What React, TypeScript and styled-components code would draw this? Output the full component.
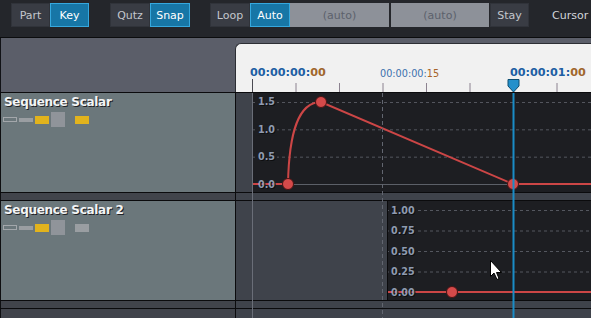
import React from 'react'
import styled, { createGlobalStyle } from 'styled-components'

const GlobalStyle = createGlobalStyle`
  html, body {
    margin: 0;
    padding: 0;
    background: #24262b;
  }
  body {
    font-family: "DejaVu Sans", Verdana, sans-serif;
  }
`

// timeline scale (lane-local x)
const ZERO = 16.5
const SEC = 261
const frameX = (f: number) => ZERO + (f / 30) * SEC
const PLAYHEAD = frameX(30)

const Frame = styled.div`
  width: 591px;
  height: 318px;
  overflow: hidden;
  display: flex;
  flex-direction: column;
  background: #3f424a;
`

const Toolbar = styled.div`
  height: 38px;
  box-sizing: border-box;
  border-bottom: 1px solid #0b0c0e;
  background: #24262b;
  display: flex;
  align-items: flex-start;
  padding: 3px 0 0 11px;
`

const Group = styled.div<{ $gap?: number }>`
  display: flex;
  margin-left: ${p => p.$gap ?? 0}px;
`

const ToolButton = styled.div<{ $active?: boolean; $w: number; $gap?: number }>`
  width: ${p => p.$w}px;
  margin-left: ${p => p.$gap ?? 0}px;
  height: 24px;
  box-sizing: border-box;
  display: flex;
  align-items: center;
  justify-content: center;
  font-size: 11px;
  color: ${p => (p.$active ? '#ffffff' : '#c3c6cc')};
  background: ${p => (p.$active ? '#1776a6' : '#393c44')};
  border: 1px solid ${p => (p.$active ? '#36a8de' : '#30333a')};
`

const Field = styled.div<{ $w: number; $gap?: number }>`
  width: ${p => p.$w}px;
  margin-left: ${p => p.$gap ?? 0}px;
  height: 24px;
  display: flex;
  align-items: center;
  justify-content: center;
  font-size: 11px;
  color: #5c616c;
  background: #8d9199;
`

const ToolLabel = styled.div`
  margin-left: 23px;
  height: 24px;
  display: flex;
  align-items: center;
  font-size: 11px;
  color: #d2d5da;
`

const HeaderRow = styled.div`
  display: flex;
  height: 55px;
  box-sizing: border-box;
  background: #5b5e69;
  border-left: 1px solid #111216;
  border-bottom: 1px solid #0b0b0d;
`

const HeaderSpacer = styled.div`
  width: 234px;
`

const Ruler = styled.div`
  flex: 1;
  margin-top: 5px;
  background: #f1f1f1;
  border-top: 1px solid #2c2e34;
  border-left: 1px solid #2c2e34;
  border-top-left-radius: 6px;
  overflow: hidden;
  svg {
    display: block;
  }
`

const Body = styled.div`
  position: relative;
  flex: 1;
  display: flex;
  flex-direction: column;
`

const Row = styled.div<{ $h: number; $last?: boolean }>`
  display: flex;
  height: ${p => p.$h}px;
  box-sizing: border-box;
  border-bottom: ${p => (p.$last ? 'none' : '1px solid #0b0b0d')};
  flex: ${p => (p.$last ? 1 : 'none')};
`

const HeadCell = styled.div<{ $track?: boolean }>`
  width: 236px;
  box-sizing: border-box;
  border-left: 1px solid #0e0f11;
  border-right: 1px solid #0b0b0d;
  background: ${p => (p.$track ? '#6b777b' : '#41444b')};
  padding: 2px 0 0 1px;
`

const Lane = styled.div`
  flex: 1;
  display: flex;
  background: #3f434b;
`

const Graph = styled.div<{ $offset: number; $edge?: boolean }>`
  margin-left: ${p => p.$offset}px;
  flex: 1;
  background: #1d1e22;
  border-left: ${p => (p.$edge ? '1px solid #0b0b0d' : 'none')};
  svg {
    display: block;
  }
`

const TrackTitle = styled.div`
  font-size: 12px;
  font-weight: bold;
  letter-spacing: -0.3px;
  color: #f3f4f5;
  text-shadow: 1px 1px 0 #202226;
  padding-left: 2px;
  line-height: 14px;
`

const Chips = styled.div`
  display: flex;
  align-items: center;
  gap: 2px;
  height: 15px;
  margin-top: 3px;
  padding-left: 1px;
`

const Chip = styled.div<{ $w: number; $h: number; $color: string; $outline?: boolean; $gap?: number }>`
  width: ${p => p.$w}px;
  height: ${p => p.$h}px;
  box-sizing: border-box;
  margin-left: ${p => p.$gap ?? 0}px;
  background: ${p => (p.$outline ? 'transparent' : p.$color)};
  border: ${p => (p.$outline ? `1px solid ${p.$color}` : 'none')};
`

const Guides = styled.div`
  position: absolute;
  top: 0;
  left: 236px;
  right: 0;
  bottom: 0;
  pointer-events: none;
  svg {
    display: block;
  }
`

const LABEL = '#8f9bb0'
const RED = '#cc4646'

function AxisLabel({ x, y, text }: { x: number; y: number; text: string }) {
  return (
    <g fontFamily="DejaVu Sans, Verdana, sans-serif" fontWeight="bold" fontSize="9.6">
      <text x={x + 1} y={y + 4.5} fill="#0d0e10">{text}</text>
      <text x={x} y={y + 3.5} fill={LABEL}>{text}</text>
    </g>
  )
}

function Key({ x, y }: { x: number; y: number }) {
  return <circle cx={x} cy={y} r={5.5} fill="#d44a4a" stroke="#4a1414" strokeWidth={1} />
}

function TrackHeader({ name, lastColor }: { name: string; lastColor: string }) {
  return (
    <HeadCell $track>
      <TrackTitle>{name}</TrackTitle>
      <Chips>
        <Chip $w={14} $h={5} $color="#a3a7ab" $outline />
        <Chip $w={14} $h={4} $color="#9a9ea2" />
        <Chip $w={14} $h={8} $color="#e2b31d" />
        <Chip $w={14} $h={15} $color="#90949a" />
        <Chip $w={14} $h={8} $color={lastColor} $gap={8} />
      </Chips>
    </HeadCell>
  )
}

function RulerScale() {
  const ticks = [0, 5, 10, 15, 20, 25, 35]
  return (
    <svg width={355} height={48}>
      {ticks.map(f => (
        <line
          key={f}
          x1={frameX(f)}
          x2={frameX(f)}
          y1={f === 0 ? 35 : 39}
          y2={48}
          stroke={f === 0 ? '#4a4a52' : '#8c8290'}
          strokeWidth={1}
        />
      ))}
      <text x={14} y={31.5} fontFamily="DejaVu Sans, sans-serif" fontWeight="bold" fontSize="11.2">
        <tspan fill="#1d5ea3">00:00:00:</tspan>
        <tspan fill="#a0662c">00</tspan>
      </text>
      <text x={144} y={33} fontFamily="DejaVu Sans, sans-serif" fontSize="9.7">
        <tspan fill="#3a70ad">00:00:00:</tspan>
        <tspan fill="#a8642a">15</tspan>
      </text>
      <text x={274} y={31.5} fontFamily="DejaVu Sans, sans-serif" fontWeight="bold" fontSize="11.2">
        <tspan fill="#1d5ea3">00:00:01:</tspan>
        <tspan fill="#a0662c">00</tspan>
      </text>
      <polygon
        points={`${PLAYHEAD - 5.5},35.5 ${PLAYHEAD + 5.5},35.5 ${PLAYHEAD + 5.5},42 ${PLAYHEAD},48 ${PLAYHEAD - 5.5},42`}
        fill="#2490cb"
        stroke="#0d4e72"
        strokeWidth={1}
      />
    </svg>
  )
}

function ScalarGraph() {
  const W = 339
  const yOf = (v: number) => 91 - v * 54.67
  const k1 = { x: 36, y: yOf(0) }
  const k2 = { x: 69, y: yOf(1.5) }
  const k3 = { x: PLAYHEAD - ZERO, y: yOf(0) }
  return (
    <svg width={W} height={99}>
      {[1.5, 1.0, 0.5].map(v => (
        <line key={v} x1={0} x2={W} y1={yOf(v) + 0.5} y2={yOf(v) + 0.5} stroke="#54575f" strokeDasharray="3 3" />
      ))}
      <line x1={0} x2={W} y1={91.5} y2={91.5} stroke="#5c6068" />
      {[1.5, 1.0, 0.5, 0].map(v => (
        <rect key={v} x={4} y={yOf(v) - 5} width={21} height={11} fill="#1d1e22" />
      ))}
      <path
        d={`M0 ${k1.y} L${k1.x} ${k1.y} C${k1.x + 1} 40, ${k1.x + 10} ${k2.y}, ${k2.x} ${k2.y} L${k3.x} ${k3.y} L${W} ${k3.y}`}
        fill="none"
        stroke={RED}
        strokeWidth={2}
      />
      {[1.5, 1.0, 0.5, 0].map(v => (
        <AxisLabel key={v} x={6} y={yOf(v)} text={v.toFixed(1)} />
      ))}
      <Key x={k1.x} y={k1.y} />
      <Key x={k2.x} y={k2.y} />
      <Key x={k3.x} y={k3.y} />
    </svg>
  )
}

function ScalarGraph2() {
  const W = 203
  const yOf = (v: number) => 91 - v * 82
  const values = [1, 0.75, 0.5, 0.25]
  return (
    <svg width={W} height={99}>
      {values.map(v => (
        <line key={v} x1={0} x2={W} y1={yOf(v) + 0.5} y2={yOf(v) + 0.5} stroke="#54575f" strokeDasharray="3 3" />
      ))}
      {[...values, 0].map(v => (
        <rect key={v} x={1} y={yOf(v) - 5} width={28} height={11} fill="#1d1e22" />
      ))}
      <line x1={0} x2={W} y1={91} y2={91} stroke={RED} strokeWidth={2} />
      {[...values, 0].map(v => (
        <AxisLabel key={v} x={3} y={yOf(v)} text={v.toFixed(2)} />
      ))}
      <Key x={64} y={91} />
    </svg>
  )
}

export default function App() {
  return (
    <>
      <GlobalStyle />
      <Frame>
        <Toolbar>
          <Group>
            <ToolButton $w={39}>Part</ToolButton>
            <ToolButton $w={39} $active>Key</ToolButton>
          </Group>
          <Group $gap={21}>
            <ToolButton $w={40}>Qutz</ToolButton>
            <ToolButton $w={40} $active>Snap</ToolButton>
          </Group>
          <Group $gap={20}>
            <ToolButton $w={40}>Loop</ToolButton>
            <ToolButton $w={40} $active>Auto</ToolButton>
          </Group>
          <Group>
            <Field $w={99}>(auto)</Field>
            <Field $w={98} $gap={2}>(auto)</Field>
            <ToolButton $w={39} $gap={1}>Stay</ToolButton>
          </Group>
          <ToolLabel>Cursor</ToolLabel>
        </Toolbar>

        <HeaderRow>
          <HeaderSpacer />
          <Ruler>
            <RulerScale />
          </Ruler>
        </HeaderRow>

        <Body>
          <Row $h={100}>
            <TrackHeader name="Sequence Scalar" lastColor="#e2b31d" />
            <Lane>
              <Graph $offset={16}>
                <ScalarGraph />
              </Graph>
            </Lane>
          </Row>
          <Row $h={8}>
            <HeadCell />
            <Lane />
          </Row>
          <Row $h={100}>
            <TrackHeader name="Sequence Scalar 2" lastColor="#9a9ea2" />
            <Lane>
              <Graph $offset={151} $edge>
                <ScalarGraph2 />
              </Graph>
            </Lane>
          </Row>
          <Row $h={8}>
            <HeadCell />
            <Lane />
          </Row>
          <Row $h={10} $last>
            <HeadCell />
            <Lane />
          </Row>

          <Guides>
            <svg width={355} height={225}>
              <line x1={ZERO} x2={ZERO} y1={0} y2={225} stroke="#6a6e78" />
              <line x1={146.5} x2={146.5} y1={0} y2={225} stroke="#626670" strokeDasharray="4 3" />
              <rect x={PLAYHEAD - 1} y={0} width={2} height={225} fill="#1a8cc6" />
              <path
                d="M254.5 167.5 L254.5 183.5 L258 180 L261 186.5 L263 185.5 L260.5 179.5 L265.5 179.5 Z"
                fill="#ffffff"
                stroke="#000000"
                strokeWidth={1}
                strokeLinejoin="round"
              />
            </svg>
          </Guides>
        </Body>
      </Frame>
    </>
  )
}
